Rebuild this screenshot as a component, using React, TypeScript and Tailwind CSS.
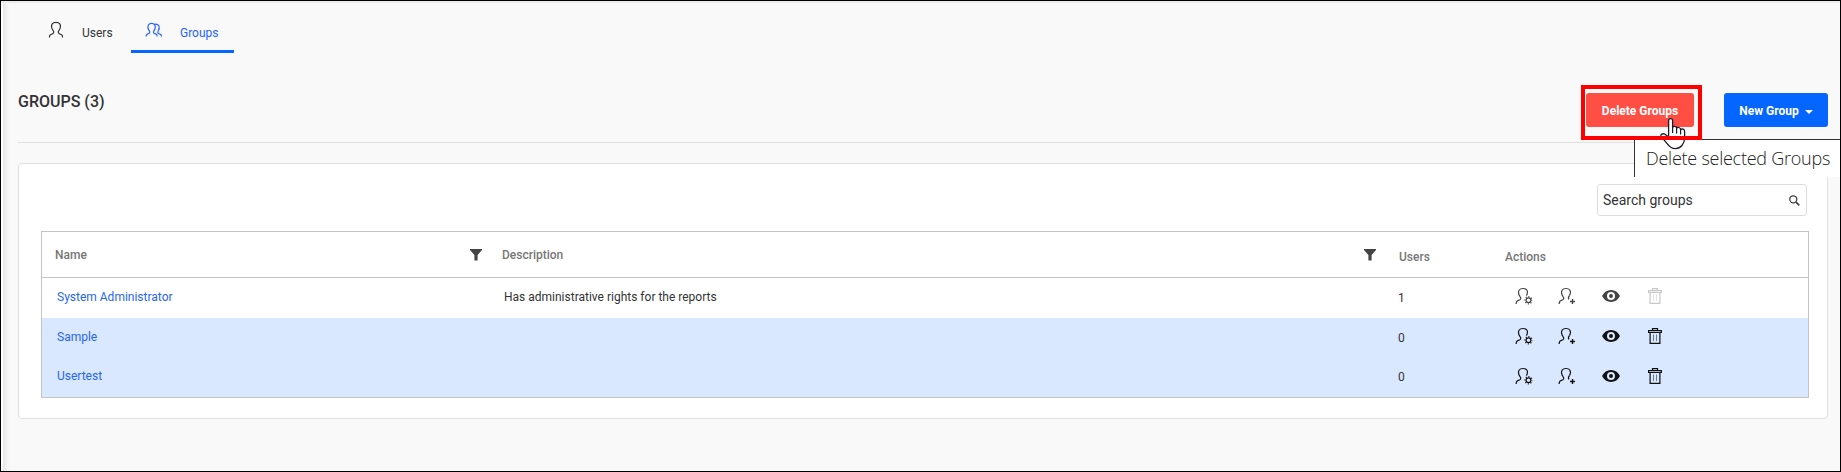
import React from "react";

type IconProps = { className?: string };

const OPEN_PERSON = "M1.2 17V15.8C1.2 14.4 2.2 13.9 3.4 13.4L4.8 12.8C6 12.2 6 10.8 5.2 9.8C3.4 7.4 3.2 4.7 4.2 3C5.6 1 10.4 1 11.8 3C12.8 4.6 12.6 6.6 11.4 8.6";

function User({ className }: IconProps) {
  return (
    <svg viewBox="0 0 16 18" fill="none" stroke="currentColor" strokeWidth="1.2" className={className}>
      <path d="M1.5 16.5V15.2C1.5 14 2.4 13.6 3.4 13.2L4.8 12.6C6 12 6 10.6 5.2 9.6C3.4 7.2 3.2 4.6 4.2 2.9C5.6 .9 10.4 .9 11.8 2.9C12.8 4.6 12.6 7.2 10.8 9.6C10 10.6 10 12 11.2 12.6L12.6 13.2C13.6 13.6 14.5 14 14.5 15.2V16.5" />
    </svg>
  );
}

function UserPair({ className }: IconProps) {
  return (
    <svg viewBox="0 0 18 16" fill="none" stroke="currentColor" strokeWidth="1.2" className={className}>
      <path d="M1.2 14.5V13.6C1.2 12.6 2 12.2 2.8 11.9L3.9 11.4C5 10.9 4.9 9.7 4.3 8.8C2.8 6.6 2.6 4.3 3.6 2.7C4.8 1 8.4 1 9.6 2.7C10.6 4.3 10.4 6.6 8.9 8.8C8.3 9.7 8.3 10.9 9.3 11.4L10.6 11.9C11.4 12.2 12 12.6 12 13.6V14.5" />
      <path d="M9.2 2.5C11 1.8 13.2 2.5 13.9 4C14.6 5.8 14.3 7.4 13.2 9C12.6 9.9 12.6 11 13.5 11.5L15 12.1C15.9 12.5 16.5 12.9 16.5 13.8V14.5" />
    </svg>
  );
}

function UserGear() {
  return (
    <svg viewBox="0 0 18 18" fill="none" stroke="currentColor" strokeWidth="1.2" className="h-[18px] w-[18px]">
      <path d={OPEN_PERSON} />
      <circle cx="13.5" cy="13.2" r="2.4" strokeWidth="1.2" />
      <circle cx="13.5" cy="13.2" r="3.6" strokeWidth="1.2" strokeDasharray="1.2 1.627" strokeDashoffset=".6" />
    </svg>
  );
}

function UserPlus() {
  return (
    <svg viewBox="0 0 18 18" fill="none" stroke="currentColor" strokeWidth="1.2" className="h-[18px] w-[18px]">
      <path d={OPEN_PERSON} />
      <path d="M11.4 8.6C10.4 10 10 11.4 11 12.4" />
      <path d="M14.5 12V17M12 14.5H17" strokeWidth="1.4" />
    </svg>
  );
}

function Eye() {
  return (
    <svg viewBox="0 0 18 12" className="h-3 w-[18px]">
      <path fill="currentColor" fillRule="evenodd" d="M0 6C2 2.2 5 0 9 0S16 2.2 18 6C16 9.8 13 12 9 12S2 9.8 0 6ZM9 2A4 4 0 1 0 9 10A4 4 0 1 0 9 2ZM9 4A2 2 0 1 1 9 8A2 2 0 1 1 9 4Z" />
    </svg>
  );
}

function Trash() {
  return (
    <svg viewBox="0 0 14 16" fill="none" stroke="currentColor" className="h-4 w-3.5">
      <path d="M4.5 2.5V.6H9.5V2.5M.6 2.6H13.4V4.5H.6ZM2.1 4.5V15.4H11.9V4.5" strokeWidth="1.2" />
      <path d="M5.5 6.5V13M8.5 6.5V13" strokeWidth=".8" opacity=".65" />
    </svg>
  );
}

function Funnel() {
  return (
    <svg viewBox="0 0 12 12" className="h-3 w-3 text-[#444]">
      <path fill="currentColor" d="M0 0H12V1L7.6 6V11.5H4.4V6L0 1Z" />
    </svg>
  );
}

function SearchIcon() {
  return (
    <svg viewBox="0 0 11 11" fill="none" stroke="currentColor" className="h-[11px] w-[11px] text-[#444]">
      <circle cx="4.3" cy="4.3" r="3.5" strokeWidth="1.3" />
      <path d="M6.8 6.8L10.3 10.3" strokeWidth="1.7" />
    </svg>
  );
}

function HandPointer() {
  return (
    <svg viewBox="0 0 26 33" className="absolute left-[1659px] top-[116px] z-20 h-[33px] w-[26px]">
      <path
        fill="#fff"
        stroke="#1b1b2b"
        strokeWidth="1.3"
        strokeLinejoin="round"
        d="M8.6 20V3.5C8.6.9 12.6.9 12.6 3.5V10.5C13 9 16.4 9 16.6 11C17.6 9.8 20.4 10.4 20.6 12.4C22 11.6 24.6 12 24.6 14.5V21C24.6 27 20.5 31.6 15.5 31.6C10.8 31.6 8.5 28.6 6.5 25.8L1.2 19.5C-.2 17.5 3 16 5 17.3Z"
      />
      <path d="M12.6 10.5V16M16.6 11V16.5M20.6 12.4V17.5" stroke="#1b1b2b" strokeWidth="1.2" />
    </svg>
  );
}

const COLUMNS = "grid grid-cols-[447px_894px_107px_1fr]";

const groups = [
  { name: "System Administrator", description: "Has administrative rights for the reports", users: 1, selected: false },
  { name: "Sample", description: "", users: 0, selected: true },
  { name: "Usertest", description: "", users: 0, selected: true },
];

function Tabs() {
  return (
    <nav className="flex h-[53px] pl-[34px] text-xs">
      <a className="flex h-[52px] w-[96px] items-start pl-[13px] text-[#333]">
        <User className="mt-[20px] h-[18px] w-4" />
        <span className="ml-[18px] mt-6 leading-4">Users</span>
      </a>
      <a className="flex h-[52px] w-[103px] items-start border-b-[3px] border-[#0566ff] pl-[14px] text-[#2563ff]">
        <UserPair className="mt-[21px] h-4 w-[18px]" />
        <span className="ml-[17px] mt-6 leading-4">Groups</span>
      </a>
    </nav>
  );
}

function GroupsTable() {
  return (
    <div className="ml-[22px] mr-[18px] mt-[15px] border border-[#c4c4c4] text-xs">
      <div className={`${COLUMNS} h-[46px] border-b border-[#c4c4c4] font-medium text-[#777]`}>
        <div className="flex items-center justify-between pl-[13px] pr-[7px]">
          <span>Name</span>
          <Funnel />
        </div>
        <div className="flex items-center justify-between pl-[13px] pr-[7px]">
          <span>Description</span>
          <Funnel />
        </div>
        <div className="pl-4 pt-[17px] leading-4">Users</div>
        <div className="pl-[15px] pt-[17px] leading-4">Actions</div>
      </div>
      {groups.map((g) => (
        <div key={g.name} className={`${COLUMNS} h-10 items-center last:h-[39px] ${g.selected ? "bg-[#dae8ff] text-[#111]" : "text-[#444]"}`}>
          <a className="pb-[3px] pl-[15px] text-[#1f66f5]">{g.name}</a>
          <span className="pb-[3px] pl-[15px] text-[#333]">{g.description}</span>
          <span className="pb-px pl-[15px] text-[#333]">{g.users}</span>
          <div className="flex items-center pb-1 pl-[25px]">
            <UserGear />
            <span className="ml-[25px]"><UserPlus /></span>
            <span className="ml-[26px]"><Eye /></span>
            <span className={g.selected ? "ml-7" : "ml-7 text-[#c8c8c8]"}><Trash /></span>
          </div>
        </div>
      ))}
    </div>
  );
}

export default function App() {
  return (
    <main className="relative h-[472px] w-[1841px] overflow-hidden border border-black bg-[#f9f9f9] font-['Roboto',sans-serif]">
      <div className="absolute inset-y-0 left-0 w-2 bg-linear-to-r from-white from-20% via-[#e9e6e7] via-30% to-[#f9f9f9]" />
      <div className="absolute inset-x-0 top-0 h-0.5 bg-[#eeebec]" />
      <Tabs />
      <div className="ml-[17px] mr-[12px]">
        <header className="flex h-[89px] items-start justify-between border-b border-[#e0e0e0]">
          <h1 className="mt-[38px] text-[16px] font-medium leading-5 text-[#333]">GROUPS (3)</h1>
          <div className="flex">
            <div className="relative mr-[22px] mt-[31px] h-[55px] w-[121px] pl-[5px] pt-2">
              <button className="flex h-[34px] w-[108px] items-center justify-center rounded-[3px] bg-[#ff4f45] pt-0.5 text-xs font-bold text-white">Delete Groups</button>
              <span className="pointer-events-none absolute inset-0 z-30 border-4 border-[#ff0000]" />
            </div>
            <button className="mt-[39px] flex h-[34px] w-[104px] items-center justify-center gap-1.5 rounded-[3px] bg-[#0566ff] pt-0.5 text-xs font-bold text-white">
              New Group
              <span className="mt-0.5 border-x-4 border-t-4 border-x-transparent border-t-white" />
            </button>
          </div>
        </header>
        <section className="mt-5 h-[256px] rounded border border-[#e0e0e0] bg-white">
          <div className="flex justify-end pr-5 pt-5">
            <div className="flex h-8 w-[210px] items-center justify-between rounded-[3px] border border-[#ddd] pl-[5px] pr-1.5">
              <span className="text-sm text-[#333]">Search groups</span>
              <SearchIcon />
            </div>
          </div>
          <GroupsTable />
        </section>
      </div>
      <div className="absolute left-[1633px] top-[138px] z-10 h-[38px] w-[206px] border-l border-t border-[#333] bg-white pl-[11px] pt-1.5 font-['Open_Sans',sans-serif] text-[18px] font-light leading-6 tracking-[-0.25px] whitespace-nowrap text-[#222]">
        Delete selected Groups
      </div>
      <HandPointer />
    </main>
  );
}
